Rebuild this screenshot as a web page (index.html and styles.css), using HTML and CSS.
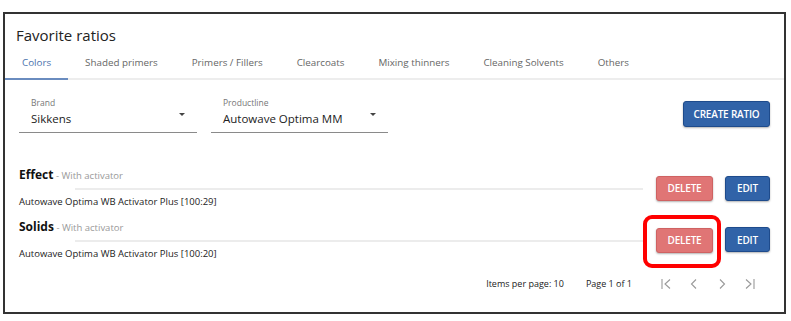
FILE: index.html
```html
<!DOCTYPE html>
<html lang="en">
<head>
    <meta charset="UTF-8">
    <meta name="viewport" content="width=device-width, initial-scale=1.0">
    <title>Favorite ratios</title>
    <link rel="stylesheet" href="styles.css">
</head>
<body>
    <div class="panel">
        <h2 class="panel-title">Favorite ratios</h2>

        <!-- Category tabs -->
        <nav class="tabs">
            <a class="tab active">Colors</a>
            <a class="tab">Shaded primers</a>
            <a class="tab">Primers / Fillers</a>
            <a class="tab">Clearcoats</a>
            <a class="tab">Mixing thinners</a>
            <a class="tab">Cleaning Solvents</a>
            <a class="tab">Others</a>
        </nav>

        <!-- Filters -->
        <div class="filters">
            <div class="field field-brand">
                <label>Brand</label>
                <div class="field-value">Sikkens<span class="caret"></span></div>
            </div>
            <div class="field field-line">
                <label>Productline</label>
                <div class="field-value">Autowave Optima MM<span class="caret"></span></div>
            </div>
            <button class="btn btn-blue btn-create">CREATE RATIO</button>
        </div>

        <!-- Ratio list -->
        <div class="ratio-list">
            <div class="ratio">
                <div class="ratio-info">
                    <div class="ratio-head"><b>Effect</b> - With activator</div>
                    <div class="ratio-line"></div>
                    <div class="ratio-item">Autowave Optima WB Activator Plus [100:29]</div>
                </div>
                <div class="ratio-actions">
                    <button class="btn btn-red">DELETE</button>
                    <button class="btn btn-blue">EDIT</button>
                </div>
            </div>
            <div class="ratio">
                <div class="ratio-info">
                    <div class="ratio-head"><b>Solids</b> - With activator</div>
                    <div class="ratio-line"></div>
                    <div class="ratio-item">Autowave Optima WB Activator Plus [100:20]</div>
                </div>
                <div class="ratio-actions">
                    <span class="highlight"><button class="btn btn-red">DELETE</button></span>
                    <button class="btn btn-blue">EDIT</button>
                </div>
            </div>
        </div>

        <!-- Paginator -->
        <div class="paginator">
            <span class="page-size">Items per page: 10</span>
            <span class="page-range">Page 1 of 1</span>
            <div class="page-nav">
                <svg width="12" height="12" viewBox="0 0 12 12"><path d="M2 1v10M10 1.5L5 6l5 4.5" fill="none" stroke="#999" stroke-width="1.1"/></svg>
                <svg width="12" height="12" viewBox="0 0 12 12"><path d="M8 1.5L3.5 6 8 10.5" fill="none" stroke="#999" stroke-width="1.1"/></svg>
                <svg width="12" height="12" viewBox="0 0 12 12"><path d="M4 1.5L8.5 6 4 10.5" fill="none" stroke="#999" stroke-width="1.1"/></svg>
                <svg width="12" height="12" viewBox="0 0 12 12"><path d="M2 1.5L7 6l-5 4.5M10 1v10" fill="none" stroke="#999" stroke-width="1.1"/></svg>
            </div>
        </div>
    </div>
</body>
</html>
```

FILE: styles.css
```css
body {
    font-family: 'Open Sans', Arial, sans-serif;
    margin: 0;
    background: #fff;
    color: #222;
}
.panel {
    margin: 12px 5px 0 3px;
    height: 302px;
    border: 2px solid #333;
    box-sizing: border-box;
}
.panel-title {
    font-size: 15px;
    font-weight: normal;
    margin: 0;
    padding: 10px 0 0 11px;
    line-height: 22px;
    color: #222;
}
.tabs {
    display: flex;
    margin-top: 3px;
    border-bottom: 2px solid #ededed;
}
.tab {
    font-size: 9.8px;
    color: #666;
    padding: 6px 17px 7px;
    line-height: 16px;
    margin-bottom: -2px;
    border-bottom: 2px solid transparent;
}
.tab.active {
    color: #4a72ad;
    border-bottom-color: #6a8cbf;
}
.filters {
    display: flex;
    align-items: flex-start;
    padding: 17px 14px 0 14px;
    height: 82px;
    box-sizing: border-box;
}
.field {
    margin-right: 14px;
    border-bottom: 1px solid #8a8a8a;
}
.field-brand {
    width: 178px;
}
.field-line {
    width: 177px;
}
.field label {
    display: block;
    font-size: 8.5px;
    color: #777;
    padding-left: 12px;
    line-height: 12px;
}
.field-value {
    position: relative;
    font-size: 11.5px;
    line-height: 18px;
    padding: 1px 0 4px 12px;
    color: #222;
}
.caret {
    position: absolute;
    right: 12px;
    top: 4px;
    border-left: 3px solid transparent;
    border-right: 3px solid transparent;
    border-top: 3px solid #444;
}
.btn {
    font-family: 'Open Sans', Arial, sans-serif;
    font-size: 10px;
    font-weight: 600;
    color: #fff;
    border-radius: 3px;
    height: 25px;
    padding: 0;
    cursor: pointer;
    box-shadow: 0 1px 2px rgba(0, 0, 0, 0.3);
    letter-spacing: -0.2px;
}
.btn-blue {
    background: #3163a8;
    border: 1px solid #1e4b8c;
}
.btn-red {
    background: #e07575;
    border: 1px solid #cf6262;
    width: 57px;
}
.btn-create {
    margin-left: auto;
    width: 87px;
    height: 26px;
    margin-top: 4px;
}
.ratio-list {
    padding: 0 14px 0 14px;
}
.ratio {
    display: flex;
    align-items: center;
    height: 52px;
}
.ratio-info {
    flex: 1;
}
.ratio-head {
    font-size: 9.5px;
    color: #999;
    line-height: 16px;
}
.ratio-head b {
    font-size: 12px;
    color: #111;
}
.ratio-line {
    height: 2px;
    background: #ececec;
    margin: 4px 0 0 56px;
}
.ratio-item {
    font-size: 9.5px;
    line-height: 14px;
    color: #222;
    margin-top: 5px;
}
.ratio-actions {
    display: flex;
    gap: 12px;
    margin-left: 13px;
}
.ratio-actions .btn-blue {
    width: 45px;
}
.highlight {
    position: relative;
    display: inline-block;
}
.highlight::after {
    content: "";
    position: absolute;
    left: -13px;
    right: -8px;
    top: -12px;
    bottom: -15px;
    border: 4px solid #ff0000;
    border-radius: 9px;
}
.paginator {
    display: flex;
    justify-content: flex-end;
    align-items: center;
    font-size: 9px;
    line-height: 12px;
    color: #222;
    padding: 12px 28px 0 0;
}
.page-size {
    margin-right: 22px;
}
.page-nav {
    display: flex;
    gap: 16px;
    margin-left: 28px;
}
```
